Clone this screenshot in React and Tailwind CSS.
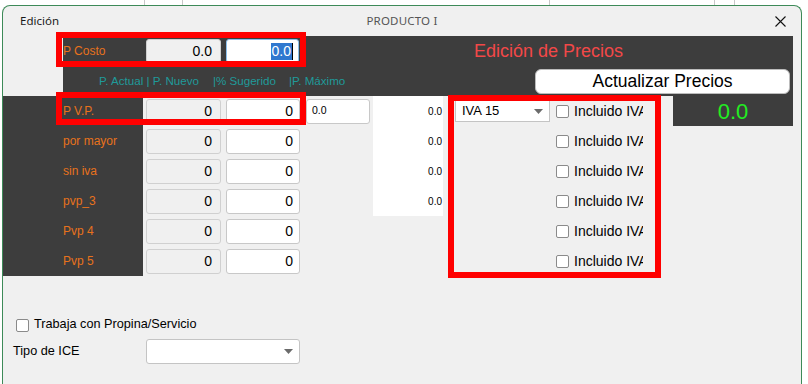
import React from "react";

const ORANGE = "text-[#e8721c]";

function Arrow() {
  return (
    <svg width="9" height="5" viewBox="0 0 9 5" className="shrink-0">
      <polygon points="0,0 9,0 4.5,5" fill="#6b6b6b" />
    </svg>
  );
}

function Check() {
  return <div className="w-[13px] h-[13px] shrink-0 border border-[#8a8a8a] rounded-[2px] bg-white" />;
}

const rows = ["P V.P.", "por mayor", "sin iva", "pvp_3", "Pvp 4", "Pvp 5"];

export default function App() {
  return (
    <div className="relative w-[808px] h-[384px] overflow-hidden bg-white font-['Liberation_Sans',Arial,sans-serif] text-black">
      {/* background spreadsheet strip */}
      <div className="flex h-[5px]">
        <div className="w-[145px] border-r border-[#c8c8c8]" />
        <div className="w-[38px] border-r border-[#c8c8c8]" />
        <div className="w-[367px] border-r border-[#c8c8c8]" />
        <div className="w-[165px] border-r border-[#c8c8c8]" />
        <div className="w-[20px] border-r border-[#c8c8c8]" />
        <div className="flex-1" />
      </div>

      {/* dialog */}
      <div className="ml-[2px] w-[800px] h-[379px] border border-b-0 border-[#3d8a58] rounded-t-[8px] bg-[#f0f0f0] flex flex-col">
        {/* title bar */}
        <div className="grid grid-cols-[1fr_auto_1fr] items-center h-[30px] font-['Noto_Sans',sans-serif] text-[11.5px]">
          <div className="pl-[17px] text-[#1a1a1a]">Edición</div>
          <div className="text-[#555] tracking-[0.2px]">PRODUCTO I</div>
          <div className="flex justify-end pr-[15px]">
            <svg width="11" height="11" viewBox="0 0 11 11">
              <path d="M0.5 0.5 L10.5 10.5 M10.5 0.5 L0.5 10.5" stroke="#111" strokeWidth="1.1" />
            </svg>
          </div>
        </div>

        {/* top dark panel */}
        <div className="flex h-[60px]">
          <div className="w-[60px]" />
          <div className="w-[730px] bg-[#3d3d3d] flex flex-col">
            <div className="flex items-center h-[30px]">
              <div className={`w-[83px] text-[12px] ${ORANGE}`}>P Costo</div>
              <div className="w-[75px] h-[24px] rounded-[3px] border border-[#d0d0d0] bg-[#f0f0f0] flex items-center justify-end pr-[8px] text-[14px]">
                0.0
              </div>
              <div className="ml-[5px] w-[73px] h-[24px] rounded-[3px] border border-[#8cc0ec] bg-white flex items-center justify-end pr-[5px] text-[14px]">
                <span className="bg-[#2f78cf] text-white leading-[17px] px-[1px]">0.0</span>
                <span className="w-[1px] h-[17px] bg-black" />
              </div>
              <div className="ml-[175px] text-[18px] text-[#f24848]">Edición de Precios</div>
            </div>
            <div className="flex items-center h-[30px]">
              <div className="pl-[36px] flex text-[11.6px] text-[#1f9a9a] whitespace-pre">
                <span className="w-[114px]">P. Actual | P. Nuevo</span>
                <span className="w-[76px]">|% Sugerido</span>
                <span>|P. Máximo</span>
              </div>
              <div className="ml-auto mr-[3px] w-[255px] h-[25px] rounded-[6px] border border-[#bcbcbc] bg-white flex items-center justify-center text-[17.5px]">
                Actualizar Precios
              </div>
            </div>
          </div>
        </div>

        {/* price rows */}
        <div className="flex flex-col">
          {rows.map((label, i) => (
            <div key={label} className="flex items-center h-[30px]">
              <div className={`w-[140px] h-full bg-[#3d3d3d] pl-[60px] flex items-center text-[12px] ${ORANGE}`}>
                {label}
              </div>
              <div className="ml-[3px] w-[75px] h-[25px] rounded-[3px] border border-[#d0d0d0] bg-[#f0f0f0] flex items-center justify-end pr-[8px] text-[14px]">
                0
              </div>
              <div className="ml-[5px] w-[74px] h-[25px] rounded-[3px] border border-[#c8c8c8] bg-white flex items-center justify-end pr-[6px] text-[14px]">
                0
              </div>
              {i === 0 ? (
                <div className="ml-[6px] w-[64px] h-[25px] rounded-[3px] border border-[#c8c8c8] bg-white flex items-center pl-[5px] text-[10.5px]">
                  0.0
                </div>
              ) : (
                <div className="ml-[6px] w-[64px]" />
              )}
              <div
                className={`ml-[3px] w-[70px] h-full flex items-center justify-end pr-[1px] text-[10px] ${
                  i < 4 ? "bg-white" : ""
                }`}
              >
                {i < 4 ? "0.0" : ""}
              </div>
              {i === 0 ? (
                <div className="ml-[12px] w-[95px] h-[22px] border border-[#c4c4c4] bg-white flex items-center justify-between pl-[6px] pr-[6px] text-[13px]">
                  <span>IVA 15</span>
                  <Arrow />
                </div>
              ) : (
                <div className="ml-[12px] w-[95px]" />
              )}
              <div className="ml-[6px]">
                <Check />
              </div>
              <div className="ml-[5px] w-[69px] overflow-hidden whitespace-nowrap text-[14px]">Incluido IVA</div>
              {i === 0 && (
                <div className="ml-[30px] w-[120px] h-full bg-[#3d3d3d] flex items-center justify-center text-[22px] text-[#22ee22]">
                  0.0
                </div>
              )}
            </div>
          ))}
        </div>

        {/* bottom */}
        <div className="mt-[39px] flex items-center h-[20px] pl-[13px]">
          <Check />
          <span className="ml-[5px] text-[12.7px]">Trabaja con Propina/Servicio</span>
        </div>
        <div className="mt-[4px] flex items-center h-[25px] pl-[10px]">
          <div className="w-[133px] text-[12.7px]">Tipo de ICE</div>
          <div className="w-[154px] h-[25px] rounded-[3px] border border-[#c4c4c4] bg-white flex items-center justify-end pr-[6px]">
            <Arrow />
          </div>
        </div>
      </div>

      {/* red annotation boxes */}
      <div className="absolute left-[56px] top-[32px] w-[250px] h-[35px] border-[6px] border-[#ff0000] pointer-events-none" />
      <div className="absolute left-[56px] top-[92px] w-[250px] h-[33px] border-[6px] border-[#ff0000] pointer-events-none" />
      <div className="absolute left-[448px] top-[95px] w-[213px] h-[183px] border-[6px] border-[#ff0000] pointer-events-none" />
    </div>
  );
}
